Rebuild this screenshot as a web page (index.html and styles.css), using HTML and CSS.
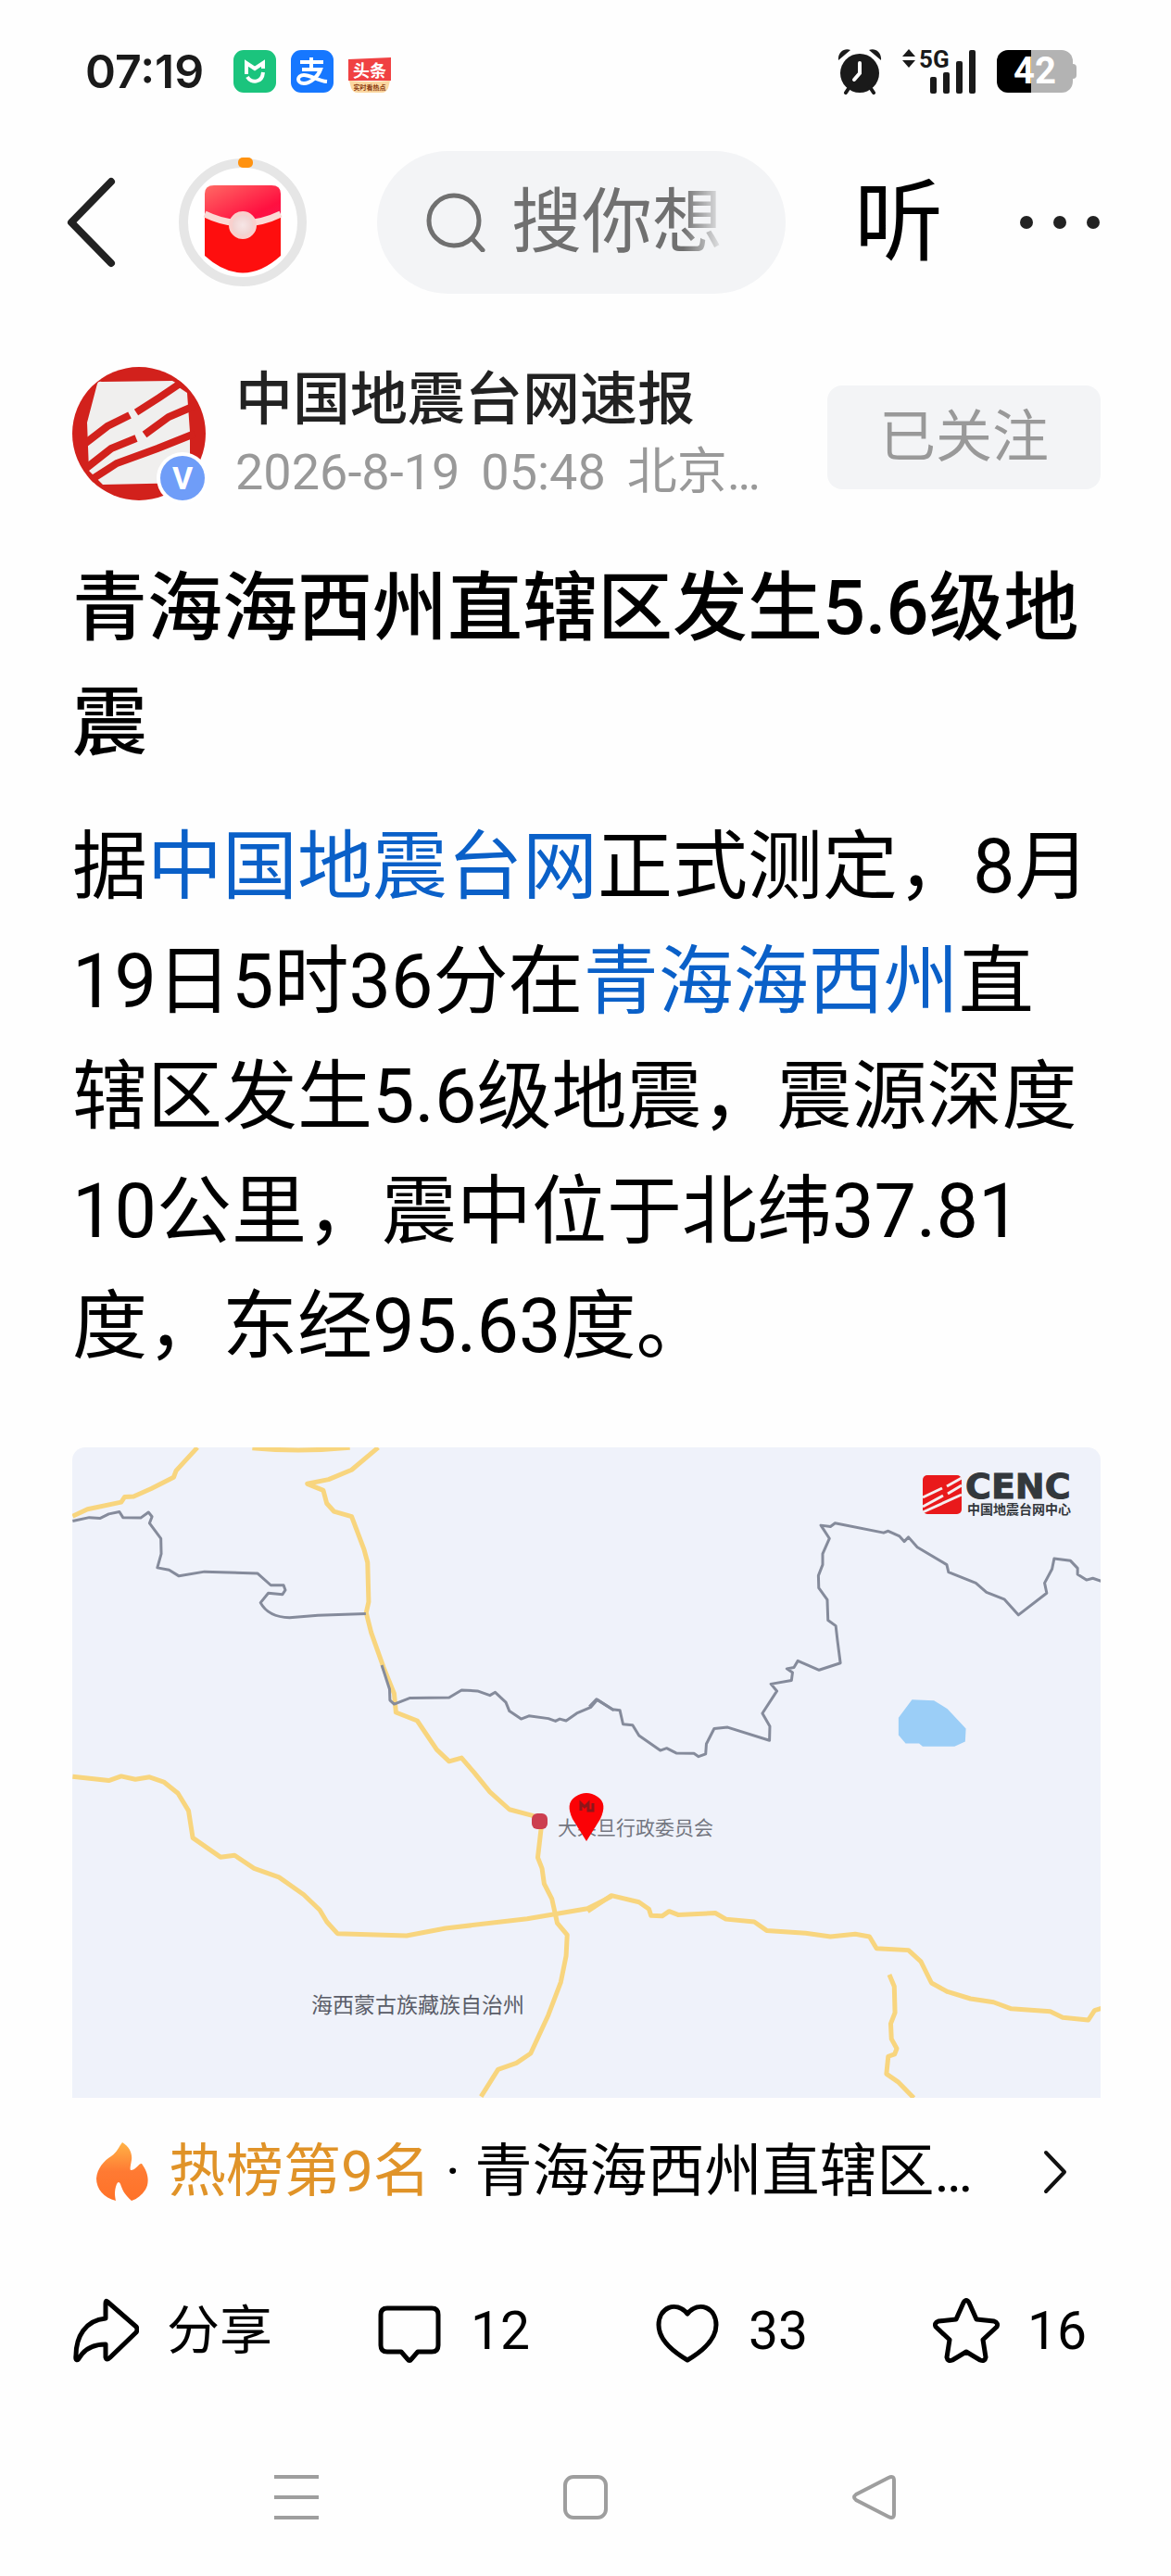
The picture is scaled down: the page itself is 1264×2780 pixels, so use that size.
FILE: index.html
```html
<!DOCTYPE html>
<html lang="zh-CN">
<head>
<meta charset="utf-8">
<meta name="viewport" content="width=device-width, initial-scale=1">
<title>青海海西州直辖区发生5.6级地震</title>
<link rel="stylesheet" href="styles.css">
</head>
<body>
<div class="status">
  <div class="status-group">
    <time class="clock">07:19</time>
    <svg class="app-icon" viewBox="0 0 46 46" aria-hidden="true">
      <rect width="46" height="46" rx="11" fill="#1bc47d"/>
      <path d="M14 26V14l9 6 9-6v6" fill="none" stroke="#fff" stroke-width="4"/>
      <path d="M15 29c4 7 16 7 17-5" fill="none" stroke="#fff" stroke-width="4"/>
    </svg>
    <svg class="app-icon" viewBox="0 0 46 46" aria-hidden="true">
      <rect width="46" height="46" rx="11" fill="#1677ff"/>
      <path d="M10 13h25M22 8v13M12 21h20c-3 8-11 15-18 15-8 0-8-9 0-9 7 0 15 6 25 7" fill="none" stroke="#fff" stroke-width="4"/>
    </svg>
    <svg class="app-icon" viewBox="0 0 46 46" aria-hidden="true">
      <path d="M0 10L46 8V33H0z" fill="#f04142"/>
      <path d="M1 33Q23 35 45 33L43 41Q41 46 36 46H10Q5 46 3 41z" fill="#fbd7a0"/>
      <text x="23" y="29" class="toutiao-name">头条</text>
      <text x="23" y="43" class="toutiao-tag">实时看热点</text>
    </svg>
  </div>
  <div class="status-group">
    <svg class="alarm" viewBox="0 0 48 50" aria-label="闹钟">
      <circle cx="24" cy="27" r="21" fill="#1a1a1a"/>
      <path d="M13 42l-4 6M35 42l4 6" stroke="#1a1a1a" stroke-width="4" stroke-linecap="round"/>
      <path d="M1 13C0 4 8-1 14 2zM47 13C48 4 40-1 34 2z" fill="#1a1a1a"/>
      <path d="M24 16v11l-6 7" fill="none" stroke="#fff" stroke-width="4" stroke-linecap="round"/>
    </svg>
    <svg class="signal" viewBox="0 0 80 48" aria-label="5G信号">
      <path d="M0 8l7-8 7 8zM0 12h14l-7 8z" fill="#1a1a1a"/>
      <text x="18" y="20" class="signal-text">5G</text>
      <g fill="#1a1a1a">
        <rect x="30" y="30" width="7" height="18" rx="2"/>
        <rect x="44" y="25" width="7" height="23" rx="2"/>
        <rect x="58" y="13" width="7" height="35" rx="2"/>
        <rect x="72" y="1" width="7" height="47" rx="2"/>
      </g>
    </svg>
    <div class="battery">42</div>
  </div>
</div>

<nav class="topbar">
  <button class="icon-btn" aria-label="返回">
    <svg width="52" height="98" viewBox="0 0 52 98"><path d="M48 5L5 49l43 44" fill="none" stroke="#222" stroke-width="8" stroke-linecap="round" stroke-linejoin="round"/></svg>
  </button>
  <button class="icon-btn" aria-label="红包">
    <svg width="138" height="138" viewBox="0 0 138 138">
      <defs>
        <linearGradient id="flap" x1="0" y1="0" x2="1" y2="1"><stop offset="0" stop-color="#ff6a64"/><stop offset=".7" stop-color="#ff1040"/><stop offset="1" stop-color="#fa1450"/></linearGradient>
        <radialGradient id="knob"><stop offset="0" stop-color="#f6e6e6"/><stop offset="1" stop-color="#f0cfcd"/></radialGradient>
      </defs>
      <circle cx="69" cy="69" r="64" fill="#fff" stroke="#e6e6e6" stroke-width="10"/>
      <rect x="64" y="-1" width="16" height="11" rx="5" fill="#ff9210"/>
      <path d="M28 62V105Q69 142 110 105V62z" fill="#fe0e0e"/>
      <path d="M28 60V38Q28 29 38 29H100Q110 29 110 38V60Q69 83 28 60z" fill="url(#flap)"/>
      <path d="M28 60Q69 80 110 60" fill="none" stroke="#fbd9d5" stroke-width="7"/>
      <circle cx="69" cy="72" r="13" fill="url(#knob)" stroke="#f9d0cd" stroke-width="4"/>
    </svg>
  </button>
  <label class="search">
    <svg width="64" height="64" viewBox="0 0 64 64" aria-hidden="true"><circle cx="30" cy="30" r="27" fill="none" stroke="#707070" stroke-width="5"/><path d="M50 50l11 12" stroke="#707070" stroke-width="5" stroke-linecap="round"/></svg>
    <input type="text" placeholder="搜你想" aria-label="搜索">
  </label>
  <button class="listen">听</button>
  <button class="icon-btn" aria-label="更多">
    <svg width="86" height="16" viewBox="0 0 86 16" fill="#222"><circle cx="7" cy="8" r="7"/><circle cx="43" cy="8" r="7"/><circle cx="79" cy="8" r="7"/></svg>
  </button>
</nav>

<main class="article">
  <header class="author">
    <svg class="avatar" viewBox="0 0 144 144" aria-label="中国地震台网">
      <clipPath id="avatar-clip"><circle cx="72" cy="72" r="72"/></clipPath>
      <g clip-path="url(#avatar-clip)">
        <rect width="144" height="144" fill="#d2211c"/>
        <path d="M27 18Q28 15 32 16L108 15Q113 17 112 20L124 28 127 70V125L33 127 18 112 16 60z" fill="#f0efee"/>
        <g fill="none" stroke="#d2211c" stroke-width="8">
          <path d="M69 49L94 33 128 10"/>
          <path d="M12 84L38 64 62 52"/>
          <path d="M14 110L42 88 69 77M78 73L104 54 132 42"/>
          <path d="M14 126L48 104 92 88 132 72"/>
        </g>
      </g>
      <circle cx="119" cy="120" r="28" fill="#fff"/>
      <circle cx="119" cy="120" r="24" fill="#6f9df8"/>
      <text x="119" y="132" class="badge-text">V</text>
    </svg>
    <div class="author-info">
      <a class="author-name" href="#author">中国地震台网速报</a>
      <div class="author-meta"><span>2026-8-19</span><span>05:48</span><span>北京…</span></div>
    </div>
    <button class="follow">已关注</button>
  </header>

  <h1>青海海西州直辖区发生5.6级地震</h1>
  <p class="body">据<a href="#cenc">中国地震台网</a>正式测定，8月19日5时36分在<a href="#haixi">青海海西州</a>直辖区发生5.6级地震，震源深度10公里，震中位于北纬37.81度，东经95.63度。</p>

  <svg class="map" viewBox="0 0 1110 702" role="img" aria-label="震中位置图">
    <rect width="1110" height="702" fill="#eff2fa"/>
    <g fill="none" stroke-linejoin="round">
      <g transform="translate(-18 -22) scale(.3827 .4717)">
        <g stroke="#f8d57e" stroke-width="5">
          <path vector-effect="non-scaling-stroke" d="M48 204L90 188 185 172 195 160 220 159 270 141 333 115 340 100 400 47M555 48Q690 58 830 47M910 47L835 98 770 120 710 130 755 145 765 175 785 193 835 205 870 280 880 310 883 400 876 425 890 470 925 550 955 610 960 653 1020 672 1075 738 1110 765 1145 757 1180 790 1225 835 1280 875 1350 890"/>
          <path vector-effect="non-scaling-stroke" d="M1370 915L1360 985 1372 1010 1378 1045 1400 1080 1415 1135 1443 1162 1440 1210 1425 1270 1390 1345 1340 1433 1300 1455 1248 1470 1200 1532"/>
          <path vector-effect="non-scaling-stroke" d="M48 800L150 809 185 799 225 806 265 801 305 812 345 838 375 878 387 940 465 984 505 980 560 1010 630 1030 700 1070 745 1105 765 1132 795 1159 990 1164 1100 1147 1330 1125 1500 1102 1568 1074"/>
        </g>
        <path vector-effect="non-scaling-stroke" stroke="#858b9b" stroke-width="3" d="M48 215L95 207 125 209 150 199 180 194 190 207 240 208 262 195 272 205 265 220 297 255 298 290 287 322 320 327 348 341 420 331 570 335 607 362 643 362 648 373 640 383 600 380 578 402 Q600 435 660 436L740 431 875 427 M920 545L942 600 943 625 955 634 1000 620 1110 619 1145 602 1190 604 1225 614 1240 607 1270 630 1280 650 1313 668 1335 661 1390 667 1410 673 1422 668 1440 672 1470 655 1510 641 1528 624 1575 648"/>
      </g>
      <g transform="translate(562 -22) scale(.3827 .4717)">
        <g stroke="#f8d57e" stroke-width="5">
          <path vector-effect="non-scaling-stroke" d="M-15 1108L52 1072 130 1087 158 1103 164 1118 195 1119 215 1108 240 1116 345 1112 375 1126 455 1132 490 1152 600 1158 670 1166 740 1160 780 1166 800 1193 890 1197 925 1223 955 1272 1000 1292 1065 1308 1130 1316 1180 1331 1290 1337 1325 1351 1397 1357 1415 1335 1435 1330"/>
          <path vector-effect="non-scaling-stroke" d="M836 1253L850 1280 852 1340 840 1365 842 1400 857 1422 851 1435 833 1440 828 1480 860 1498 905 1535"/>
        </g>
        <path vector-effect="non-scaling-stroke" stroke="#858b9b" stroke-width="3" d="M-10 640L10 623 55 646 76 648 85 680 112 682 130 706 190 740 208 735 235 746 285 747 298 754 318 748 320 725 342 690 380 687 498 717 499 685 478 655 519 604 502 588 560 580 563 562 547 553 567 550 578 535 638 556 698 540 690 490 685 455 663 442 661 395 637 368 636 340 648 315 648 290 667 255 643 225 670 228 683 220 820 242 833 238 865 250 878 262 890 252 915 275 998 315 1003 332 1080 357 1110 378 1160 394 1200 430 1280 380 1274 357 1295 325 1301 301 1347 306 1367 323 1367 337 1392 350 1410 346 1435 353"/>
        <path fill="#9bcef7" d="M862 665L900 624 962 626 1000 645 1052 690 1050 720 1020 731 930 731 920 724 882 724 862 705z"/>
      </g>
    </g>
    <rect x="496" y="395" width="17" height="17" rx="6" fill="#cc3f50"/>
    <text x="524" y="418" class="place">大柴旦行政委员会</text>
    <text x="258" y="610" class="region">海西蒙古族藏族自治州</text>
    <path d="M555 425L540 401Q532 384 543 377 555 369 567 377 578 384 570 401z" fill="#fb0206"/>
    <path d="M549 392v-8l4 4 4-4v8h5v-8" fill="none" stroke="#8d1619" stroke-width="3"/>
    <rect x="918" y="30" width="42" height="42" rx="5" fill="#e9191b"/>
    <path d="M918 54l21-10M944 42l16-9M918 64l22-12M945 50l15-9M918 70l42-19" stroke="#f4eef0" stroke-width="3"/>
    <text x="964" y="55" class="cenc">CENC</text>
    <text x="966" y="72" class="cenc-sub">中国地震台网中心</text>
  </svg>

  <a class="hot" href="#hot">
    <svg class="flame" width="56" height="64" viewBox="0 0 56 64" aria-hidden="true">
      <defs><linearGradient id="fire" x1="0" y1="0" x2="0" y2="1"><stop offset="0" stop-color="#ffb347"/><stop offset=".5" stop-color="#ff7a33"/><stop offset="1" stop-color="#ff7228"/></linearGradient></defs>
      <path d="M28 0C36 5 39 12 38 19 37 25 36 29 37 30 43 30 46 22 49 23 57 34 57 44 53 51 49 57 44 61 38 63 30 56 28 51 26 45Q24 41 22 45C19 53 20 58 21 63 8 60 0 50 0 39 1 28 8 20 16 15 23 10 24 5 28 0z" fill="url(#fire)"/>
    </svg>
    <span class="hot-rank">热榜第9名</span>
    <span class="hot-title">·&nbsp;青海海西州直辖区…</span>
    <svg class="chevron" width="26" height="48" viewBox="0 0 26 48" aria-hidden="true"><path d="M3 3l20 21L3 45" fill="none" stroke="#111" stroke-width="4" stroke-linecap="round" stroke-linejoin="round"/></svg>
  </a>

  <div class="actions">
    <button class="action">
      <svg viewBox="0 0 72 72"><path d="M38 4Q36 2 36 6V22C14 24 4 42 4 62 3 68 6 68 8 64 14 54 24 50 36 50V64Q37 68 41 64L69 37Q71 34 69 31z"/></svg>
      <span>分享</span>
    </button>
    <button class="action">
      <svg viewBox="0 0 72 72"><path d="M12 11H60Q67 11 67 18V51Q67 58 60 58H45L38 66Q36 69 34 66L27 58H12Q5 58 5 51V18Q5 11 12 11z"/></svg>
      <span>12</span>
    </button>
    <button class="action">
      <svg viewBox="0 0 72 72"><path d="M36 17C23 2 5 11 5 29 5 44 19 57 36 67 53 57 67 44 67 29 67 11 49 2 36 17z"/></svg>
      <span>33</span>
    </button>
    <button class="action">
      <svg viewBox="0 0 72 72"><path d="M33 5Q36 0 39 5L47 23 66 25Q71 27 69 31L54 45 57 64Q56 69 51 67L36 58 21 67Q16 69 15 64L18 45 3 31Q1 27 6 25L25 23z"/></svg>
      <span>16</span>
    </button>
  </div>
</main>

<nav class="sysbar">
  <button class="icon-btn" aria-label="最近任务"><svg viewBox="0 0 48 48"><path d="M0 2h48M0 24h48M0 46h48"/></svg></button>
  <button class="icon-btn" aria-label="主屏幕"><svg viewBox="0 0 48 48"><rect x="2" y="2" width="44" height="44" rx="9"/></svg></button>
  <button class="icon-btn" aria-label="返回"><svg viewBox="0 0 48 48"><path d="M39 3Q45 0 45 6V42Q45 48 39 45L4 27Q0 24 4 21z"/></svg></button>
</nav>
</body>
</html>
```
FILE: styles.css
```css
* {
  box-sizing: border-box;
}

body {
  margin: 0;
  background: #fefefe;
  color: #000;
  font-family: Roboto, "Noto Sans CJK SC", sans-serif;
}

button {
  border: 0;
  padding: 0;
  background: none;
  color: inherit;
  font: inherit;
}

a {
  color: inherit;
  text-decoration: none;
}

svg {
  display: block;
  flex: none;
}

.icon-btn {
  flex: none;
}

.icon-btn svg {
  overflow: visible;
}

/* Status bar */
.status {
  display: flex;
  justify-content: space-between;
  align-items: center;
  height: 154px;
  padding: 0 106px 0 92px;
  color: #1a1a1a;
}

.status-group {
  display: flex;
  align-items: center;
  gap: 16px;
}

.clock {
  min-width: 144px;
  font: 600 50px/1 Inter, sans-serif;
}

.app-icon {
  width: 46px;
  height: 46px;
}

.toutiao-name {
  fill: #fff;
  font-size: 18px;
  font-weight: 700;
  text-anchor: middle;
}

.toutiao-tag {
  fill: #8a3a10;
  font-size: 7px;
  font-weight: 700;
  text-anchor: middle;
}

.alarm {
  width: 48px;
  height: 50px;
}

.signal {
  width: 80px;
  height: 48px;
  margin: 0 6px;
  overflow: visible;
}

.signal-text {
  fill: #1a1a1a;
  font-size: 26px;
  font-weight: 700;
}

.battery {
  position: relative;
  width: 82px;
  height: 46px;
  border-radius: 12px;
  background: linear-gradient(90deg, #000 45%, #b3b3b3 45%);
  color: #fff;
  font: 700 40px/46px Roboto, sans-serif;
  text-align: center;
}

.battery::after {
  content: "";
  position: absolute;
  left: 100%;
  top: 15px;
  width: 4px;
  height: 16px;
  border-radius: 0 4px 4px 0;
  background: #b3b3b3;
}

/* Top bar */
.topbar {
  display: flex;
  align-items: center;
  gap: 69px;
  margin-top: 9px;
  padding: 0 77px 0 72px;
}

.search {
  display: flex;
  flex: 1;
  align-items: center;
  gap: 28px;
  min-width: 0;
  height: 154px;
  margin: 0 5px 0 7px;
  padding: 0 64px 0 53px;
  border-radius: 77px;
  background: #f3f4f6;
}

.search input {
  flex: 1;
  min-width: 0;
  height: 110px;
  padding: 0;
  border: 0;
  outline: 0;
  background: none;
  font: 400 76px/110px Roboto, "Noto Sans CJK SC", sans-serif;
  -webkit-mask-image: linear-gradient(90deg, #000 80%, transparent);
  mask-image: linear-gradient(90deg, #000 80%, transparent);
}

.search input::placeholder {
  color: #707070;
  opacity: 1;
}

.listen {
  width: 110px;
  font-size: 96px;
  line-height: 120px;
  text-align: left;
}

/* Article */
.article {
  padding: 0 76px 0 78px;
}

.author {
  display: flex;
  align-items: center;
  gap: 32px;
  margin-top: 70px;
}

.avatar {
  width: 144px;
  height: 144px;
  overflow: visible;
}

.badge-text {
  fill: #fff;
  font-size: 34px;
  font-weight: 700;
  text-anchor: middle;
}

.author-info {
  display: flex;
  flex: 1;
  flex-direction: column;
  min-width: 0;
  padding-top: 6px;
}

.author-name {
  color: #222;
  font-size: 62px;
  font-weight: 500;
  line-height: 78px;
}

.author-meta {
  display: flex;
  gap: 23px;
  color: #999;
  font-size: 54px;
  line-height: 78px;
  white-space: nowrap;
}

.follow {
  flex: none;
  width: 295px;
  height: 112px;
  margin-top: 8px;
  border-radius: 16px;
  background: #f3f4f6;
  color: #999;
  font-size: 61px;
  line-height: 112px;
}

h1 {
  margin: 46px 0 0;
  font-size: 81px;
  font-weight: 500;
  line-height: 124px;
}

.body {
  margin: 31px 0 0;
  font-size: 81px;
  line-height: 124px;
}

.body a {
  color: #0a60c8;
}

.map {
  width: 100%;
  height: auto;
  margin-top: 68px;
  border-radius: 14px 14px 0 0;
}

.place {
  fill: #737680;
  font-size: 21px;
}

.region {
  fill: #5a5d68;
  font-size: 23px;
}

.cenc {
  fill: #33383c;
  stroke: #33383c;
  stroke-width: 1px;
  font: 700 38px "DejaVu Sans", sans-serif;
}

.cenc-sub {
  fill: #33383c;
  font-size: 14px;
  font-weight: 700;
}

.hot {
  display: flex;
  align-items: center;
  height: 80px;
  margin-top: 40px;
  padding: 0 36px 0 26px;
  font-size: 62px;
  line-height: 72px;
  white-space: nowrap;
}

.hot-rank {
  margin: 0 16px 0 22px;
  color: #e09328;
}

.hot-title {
  flex: 1;
}

.actions {
  display: grid;
  grid-template-columns: 328fr 300fr 301fr 181fr;
  margin-top: 96px;
}

.action {
  display: flex;
  align-items: center;
  gap: 30px;
  height: 72px;
  font-size: 57px;
  line-height: 72px;
  white-space: nowrap;
}

.action svg {
  width: 72px;
  height: 72px;
  fill: none;
  stroke: #000;
  stroke-width: 5px;
  stroke-linejoin: round;
}

/* System navigation */
.sysbar {
  display: flex;
  justify-content: center;
  gap: 264px;
  margin-top: 119px;
  padding-bottom: 61px;
}

.sysbar svg {
  width: 48px;
  height: 48px;
  fill: none;
  stroke: #9e9e9e;
  stroke-width: 4px;
}
```
